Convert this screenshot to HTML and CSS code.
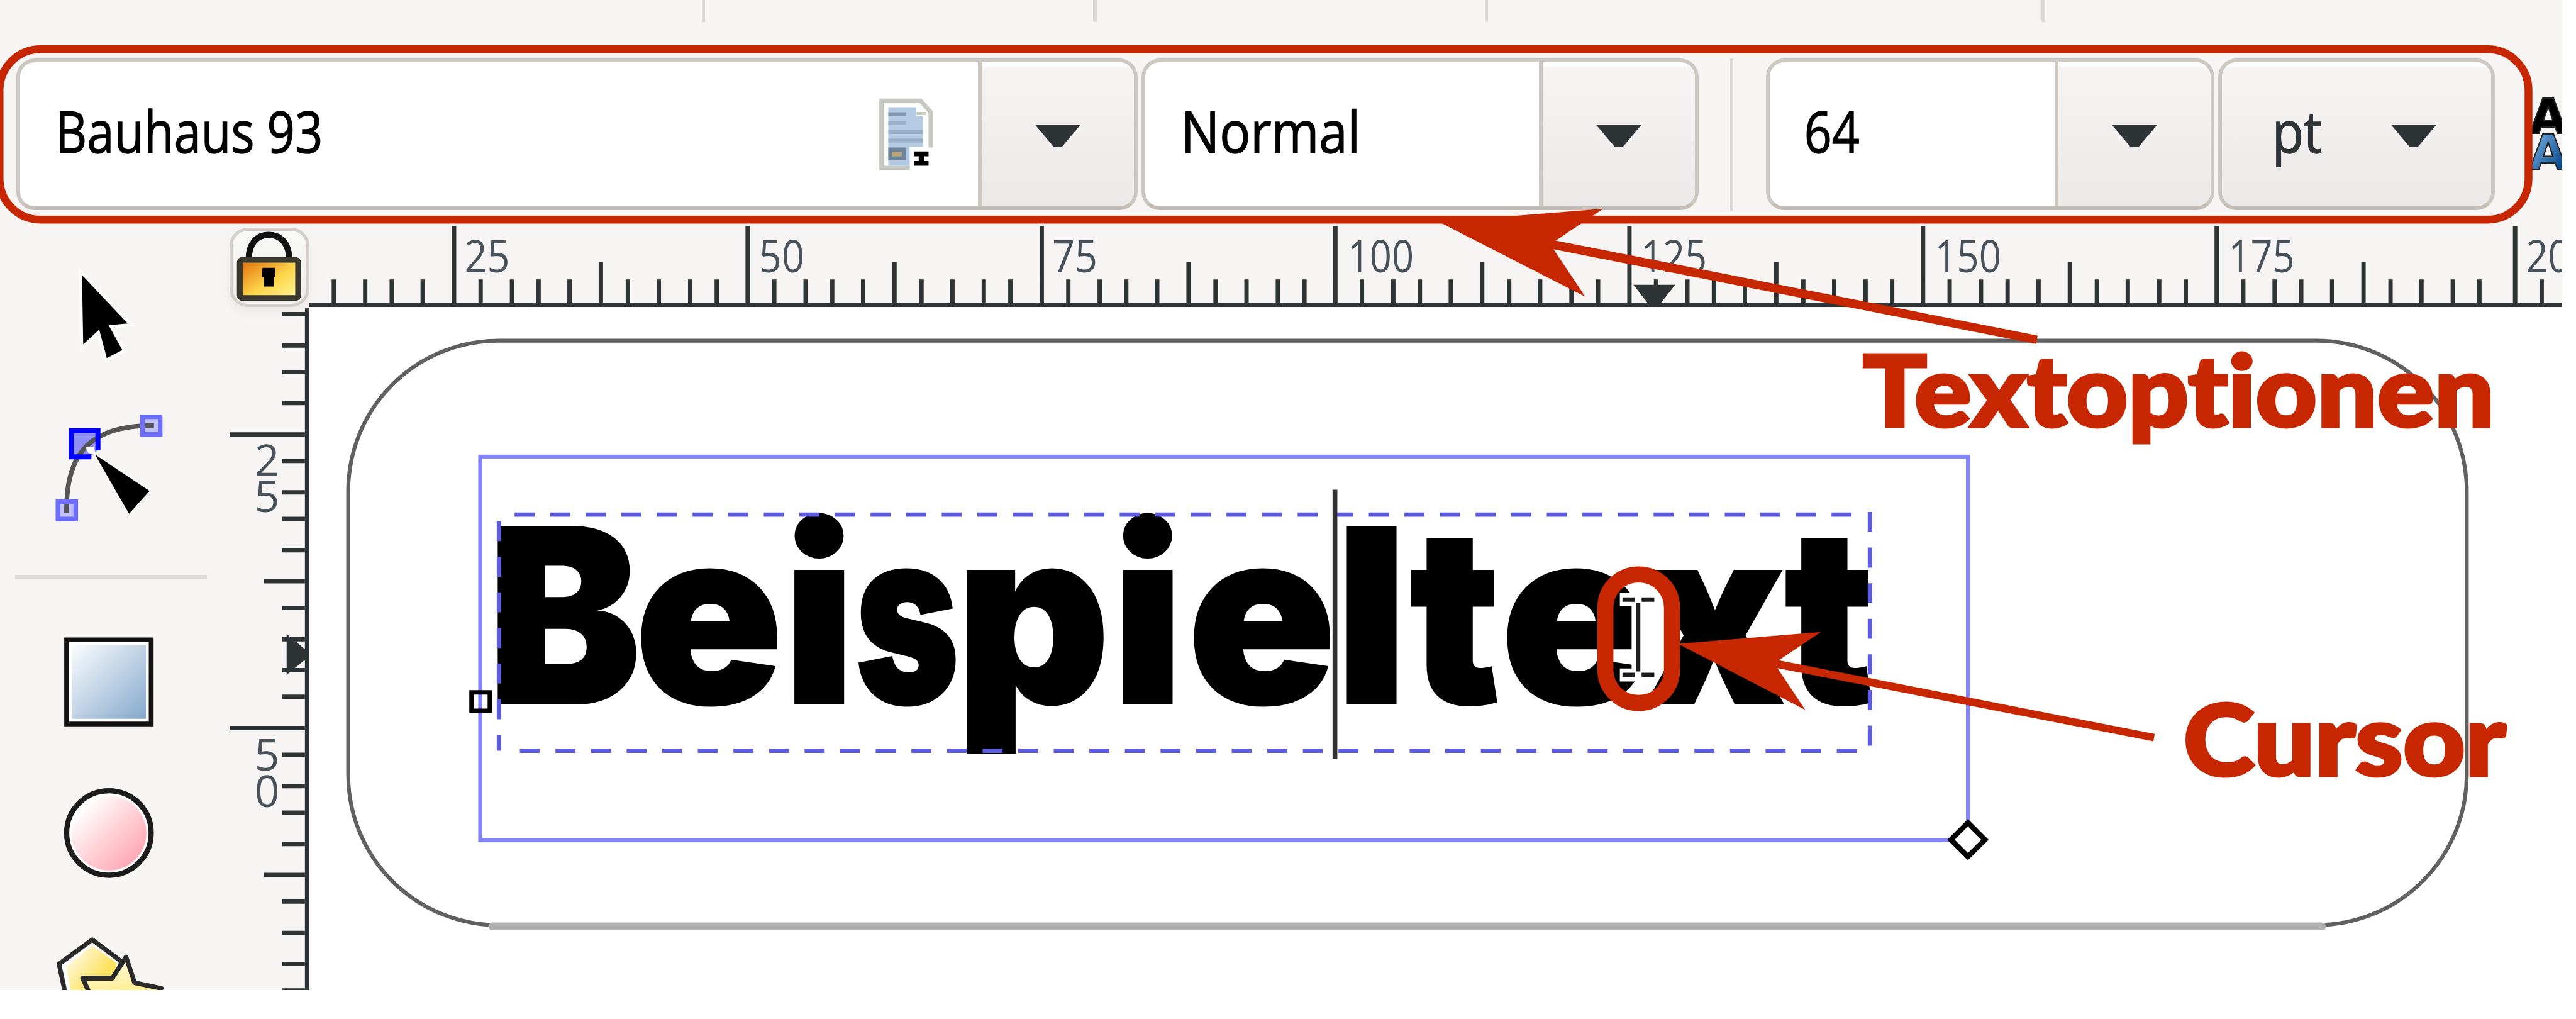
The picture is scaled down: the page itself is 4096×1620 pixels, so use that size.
FILE: index.html
```
<!DOCTYPE html>
<html lang="de">
<head>
<meta charset="utf-8">
<title>Textwerkzeug</title>
<link rel="stylesheet" href="styles.css">
</head>
<body>
<div class="app">
  <div class="commandbar"><i></i><i></i><i></i><i></i></div>

  <div class="textbar">
    <div class="combo combo-font">
      <div class="entry">
        <svg class="label" width="800" height="328" viewBox="0 0 800 328"><text x="81" y="207" textLength="614" lengthAdjust="spacingAndGlyphs">Bauhaus 93</text></svg>
        <svg class="docicon" viewBox="200 370 382 507">
          <path d="M220 392H490L560 470V715H430V855H220Z" fill="#fff"/>
          <path d="M415 855H220V392H490L560 470V715" fill="none" stroke="#c6c9c1" stroke-width="30"/>
          <path d="M267 437H460V500H508V708H415V840H267Z" fill="#b5cbe4"/>
          <path d="M465 437V495H520Z" fill="#fff"/><path d="M462 480H530" stroke="#c6c9bd" stroke-width="22"/>
          <path d="M267 485H388" stroke="#8199b5" stroke-width="28"/>
          <path d="M267 546H388M267 607H508M267 667H508" stroke="#9ab0ca" stroke-width="28"/>
          <path d="M267 715H388V802H267Z" fill="#6c8299"/><path d="M292 745H360V776H292Z" fill="#bba679"/>
          <path d="M445 742H545V775H515V808H545V840H445V808H477V775H445Z"/>
        </svg>
      </div>
      <div class="drop"><svg viewBox="0 0 104 54"><path d="M0 2H104L62 52H42Z"/></svg></div>
    </div>
    <div class="combo combo-style">
      <div class="entry"><svg class="label" width="600" height="328" viewBox="0 0 600 328"><text x="82" y="207" textLength="412" lengthAdjust="spacingAndGlyphs">Normal</text></svg></div>
      <div class="drop"><svg viewBox="0 0 104 54"><path d="M0 2H104L62 52H42Z"/></svg></div>
    </div>
    <div class="divider"></div>
    <div class="combo combo-size">
      <div class="entry"><svg class="label" width="400" height="328" viewBox="0 0 400 328"><text x="79" y="207" textLength="127" lengthAdjust="spacingAndGlyphs">64</text></svg></div>
      <div class="drop"><svg viewBox="0 0 104 54"><path d="M0 2H104L62 52H42Z"/></svg></div>
    </div>
    <div class="combo combo-unit">
      <div class="drop">
        <svg class="label" width="300" height="328" viewBox="0 0 300 328"><text class="unit" x="115" y="207" textLength="115" lengthAdjust="spacingAndGlyphs">pt</text></svg>
        <svg viewBox="0 0 104 54"><path d="M0 2H104L62 52H42Z"/></svg>
      </div>
    </div>
    <svg class="spacing-icon" viewBox="5800 200 100 210">
      <defs><linearGradient id="ga" x1="0" y1="0" x2="1" y2="1"><stop offset="0" stop-color="#8cc3f2"/><stop offset=".8" stop-color="#0b4a8c"/></linearGradient></defs>
      <text x="5850" y="305">A</text><text x="5850" y="388" fill="url(#ga)" stroke="#34506c">A</text>
    </svg>
  </div>

  <div class="work">
    <div class="toolbox">
      <svg height="357" viewBox="0 513 527 357">
        <path transform="translate(80 600) scale(.408)" d="M265 78L522 350L415 360L492 500L405 545L362 385L272 468Z" stroke="#fff" stroke-width="40" paint-order="stroke" stroke-opacity=".6"/>
      </svg>
      <svg height="449" viewBox="0 870 527 449">
        <g transform="translate(80 600) scale(.408)" fill="none">
          <path d="M205 950H355V1060L310 1098H205Z" fill="#8f8ff6"/>
          <path d="M605 873H705V972H605ZM130 1350H230V1448H130Z" fill="#c2c2fa"/>
          <path d="M178 1415C175 1130 260 920 670 922" stroke="#555" stroke-width="26"/>
          <path d="M605 873H705V972H605ZM130 1350H230V1448H130Z" stroke="#6c6cff" stroke-width="26"/>
          <path d="M318 1098H205V950H355V1062" stroke="#0000ff" stroke-width="28"/>
          <path d="M285 1045L330 1040L345 1090L300 1075Z" fill="#fff"/>
          <path d="M338 1085L645 1290L530 1418Z" fill="#000"/>
        </g>
      </svg>
      <div class="toolbox-rule"></div>
      <svg height="431" viewBox="0 1329 527 431">
        <defs><linearGradient id="gb" x1="0" y1="0" x2="1" y2="1"><stop offset="0" stop-color="#fbfcfd"/><stop offset="1" stop-color="#85a9cd"/></linearGradient></defs>
        <path d="M153 1468H347V1661H153Z" fill="#fff" stroke="#111" stroke-width="11"/><path d="M165 1480H335V1649H165Z" fill="url(#gb)"/>
      </svg>
      <svg height="340" viewBox="0 1760 527 340">
        <defs><linearGradient id="gc" x1=".15" y1=".15" x2=".85" y2=".85"><stop offset="0" stop-color="#fff"/><stop offset="1" stop-color="#ffa9b4"/></linearGradient></defs>
        <circle cx="250" cy="1912" r="97" fill="#fff" stroke="#1c1c1c" stroke-width="12"/><circle cx="250" cy="1912" r="86" fill="url(#gc)"/>
      </svg>
      <svg height="172" viewBox="0 2100 527 172">
        <defs>
          <linearGradient id="gd" x1="0" y1="0" x2=".6" y2=".6"><stop offset="0" stop-color="#fff"/><stop offset="1" stop-color="#fde25f"/></linearGradient>
          <linearGradient id="gf" x1=".4" y1="0" x2=".6" y2="1"><stop offset="0" stop-color="#fffbe0"/><stop offset=".6" stop-color="#fdec90"/></linearGradient>
        </defs>
        <g transform="translate(60 1700) scale(.408)" stroke="#2a2a2a" stroke-width="26" stroke-linejoin="round">
          <path d="M372 1118L535 1240L480 1560H250L185 1255Z" fill="#fff"/>
          <path d="M372 1150L510 1250L470 1500H270L225 1270Z" fill="url(#gd)" stroke="none"/>
          <path d="M562 1215L610 1360L760 1392L640 1560H420L318 1335H485Z" fill="url(#gf)"/>
        </g>
      </svg>
    </div>

    <div class="lockcell">
      <button class="lock" aria-label="Hilfslinien sperren">
        <svg viewBox="537 530 165 165">
          <defs><linearGradient id="ge" x1="0" y1="0" x2="1" y2="1"><stop offset="0" stop-color="#e0690c"/><stop offset=".55" stop-color="#fdd44a"/><stop offset="1" stop-color="#fff79a"/></linearGradient></defs>
          <path d="M573 594C573 560 590 539 618 539S664 560 664 594" fill="none" stroke="#111" stroke-width="14"/>
          <rect x="553" y="595" width="131" height="86" rx="6" fill="url(#ge)" stroke="#3a372c" stroke-width="13"/>
          <path d="M604 613H632V633H629V655H607V633H602Z"/>
        </svg>
      </button>
    </div>

    <svg class="ruler-h" viewBox="710 513 5171 193" preserveAspectRatio="none">
      <defs>
        <path id="ht" d="M0 519V700M61 642V700M133 642V700M194 642V700M265 642V700M337 601V700M399 642V700M470 642V700M542 642V700M603 642V700"/>
      </defs>
      <g class="ticks">
        <path d="M766 642V700M838 642V700M899 642V700M970 642V700M708 700H5881"/>
        <use href="#ht" x="1042"/><use href="#ht" x="1716"/><use href="#ht" x="2391"/><use href="#ht" x="3065"/><use href="#ht" x="3740"/><use href="#ht" x="4414"/><use href="#ht" x="5088"/><use href="#ht" x="5773"/>
      </g>
      <path d="M3749 654H3845L3806 704H3788Z" fill="#2e3436"/>
      <g class="nums">
        <text x="1066" y="626" textLength="104" lengthAdjust="spacingAndGlyphs">25</text>
        <text x="1742" y="626" textLength="104" lengthAdjust="spacingAndGlyphs">50</text>
        <text x="2415" y="626" textLength="104" lengthAdjust="spacingAndGlyphs">75</text>
        <text x="3093" y="626" textLength="152" lengthAdjust="spacingAndGlyphs">100</text>
        <text x="3766" y="626" textLength="152" lengthAdjust="spacingAndGlyphs">125</text>
        <text x="4441" y="626" textLength="152" lengthAdjust="spacingAndGlyphs">150</text>
        <text x="5115" y="626" textLength="152" lengthAdjust="spacingAndGlyphs">175</text>
        <text x="5798" y="626" textLength="152" lengthAdjust="spacingAndGlyphs">200</text>
      </g>
    </svg>

    <svg class="ruler-v" viewBox="527 706 183 1566" preserveAspectRatio="none">
      <defs>
        <path id="vt" d="M527 0H700M648 61H700M648 133H700M648 194H700M648 266H700M606 337H700M648 398H700M648 470H700M648 541H700M648 602H700"/>
      </defs>
      <g class="ticks">
        <path d="M648 721H700M648 793H700M648 854H700M648 925H700M705 706V2272"/>
        <use href="#vt" y="997"/><use href="#vt" y="1671"/>
      </g>
      <path d="M658 1455L705 1494V1510L658 1549Z" fill="#2e3436"/>
      <g class="nums" text-anchor="middle">
        <text x="613" y="1093">2</text><text x="613" y="1175">5</text>
        <text x="613" y="1768">5</text><text x="613" y="1852">0</text>
      </g>
    </svg>

    <svg class="canvas" viewBox="710 706 5171 1566" preserveAspectRatio="none">
      <rect x="799" y="782" width="4863" height="1341" rx="345" fill="none" stroke="#606060" stroke-width="9"/>
      <path d="M1130 2126H5330" stroke="#b0b0b0" stroke-width="18" stroke-linecap="round"/>
      <text class="sample" y="1614"><tspan x="1120" textLength="350" lengthAdjust="spacingAndGlyphs">B</tspan><tspan x="1457" textLength="340" lengthAdjust="spacingAndGlyphs">e</tspan><tspan x="1798">i</tspan><tspan x="1962" textLength="240" lengthAdjust="spacingAndGlyphs">s</tspan><tspan x="2194" textLength="353" lengthAdjust="spacingAndGlyphs">p</tspan><tspan x="2552">i</tspan><tspan x="2726" textLength="340" lengthAdjust="spacingAndGlyphs">e</tspan><tspan x="3066">l</tspan><tspan x="3236" textLength="206" lengthAdjust="spacingAndGlyphs">t</tspan><tspan x="3445" textLength="340" lengthAdjust="spacingAndGlyphs">e</tspan><tspan x="3775" textLength="322" lengthAdjust="spacingAndGlyphs">x</tspan><tspan x="4096" textLength="206" lengthAdjust="spacingAndGlyphs">t</tspan></text>
      <rect x="1102" y="1048" width="3415" height="880" fill="none" stroke="#8484ff" stroke-width="9"/>
      <g fill="none" stroke="#5c5cdc" stroke-width="10" stroke-dasharray="46 35.7">
        <path d="M1181 1181H4260"/><path d="M1193 1723H4270"/><path d="M1145 1196V1723"/><path d="M4292 1175V1723"/>
      </g>
      <path d="M1082 1589H1124V1631H1082Z" fill="none" stroke="#000" stroke-width="10"/>
      <path d="M4517 1888L4556 1927L4517 1966L4478 1927Z" fill="#fff" stroke="#000" stroke-width="12"/>
      <path d="M3064 1124V1742" stroke="#333" stroke-width="11"/>
      <g fill="none">
        <path d="M3718 1376H3803M3718 1549H3803M3760 1376V1549" stroke="#fff" stroke-width="30"/>
        <path d="M3724 1376H3752M3768 1376H3797M3724 1549H3752M3768 1549H3797M3760 1384V1541" stroke="#1c1c1c" stroke-width="10"/>
      </g>
    </svg>
  </div>
</div>

<svg class="notes" viewBox="0 0 5913 2338" preserveAspectRatio="none">
  <g fill="none">
    <rect x="-1" y="113" width="5805" height="391" rx="94" stroke-width="18"/>
    <rect x="3685" y="1318" width="153" height="295" rx="76" stroke-width="37"/>
  </g>
  <g>
    <path stroke="none" d="M3303 509L3680 479L3571 552L4677 770L4674 789L3566 572L3639 681Z"/>
    <path stroke="none" d="M3852 1477L4180 1450L4083 1515L4946 1684L4943 1701L4080 1533L4144 1629Z"/>
    <text x="4276" y="979" textLength="1450" lengthAdjust="spacingAndGlyphs">Textoptionen</text>
    <text x="5012" y="1779" textLength="740" lengthAdjust="spacingAndGlyphs">Cursor</text>
  </g>
</svg>
</body>
</html>
```
FILE: styles.css
```
:root { --u: 0.69271px; --edge: #cdc7c2; --ink: #2e3436; }

* { box-sizing: border-box; }

body {
  margin: 0;
  width: 4096px;
  height: 1620px;
  overflow: hidden;
  position: relative;
  background: #fff;
  font-family: "Open Sans", "Noto Sans", sans-serif;
}

svg { display: block; flex: none; }

.app {
  width: calc(5881 * var(--u));
  height: 1574px;
  background: #f6f5f3;
  overflow: hidden;
  display: flex;
  flex-direction: column;
}

.commandbar { flex: none; height: calc(104 * var(--u)); display: flex; }
.commandbar i { width: calc(8 * var(--u)); height: calc(50 * var(--u)); background: #dbd8d5; margin-left: calc(890.5 * var(--u)); }
.commandbar i:first-child { margin-left: calc(1611 * var(--u)); }
.commandbar i:last-child { margin-left: calc(1270 * var(--u)); }

.textbar {
  flex: none;
  height: calc(409 * var(--u));
  padding: calc(30 * var(--u)) 0 0 calc(37 * var(--u));
  display: flex;
  align-items: flex-start;
}
.combo {
  flex: none;
  height: calc(348 * var(--u));
  display: flex;
  border: calc(9 * var(--u)) solid var(--edge);
  border-bottom-color: #c5beb8;
  border-radius: calc(42 * var(--u));
  background: #fff;
  overflow: hidden;
  margin-right: calc(9 * var(--u));
}
.combo-font { width: calc(2574 * var(--u)); }
.combo-style { width: calc(1279 * var(--u)); }
.combo-size { width: calc(1030 * var(--u)); }
.combo-unit { width: calc(635 * var(--u)); }
.entry { flex: 1; min-width: 0; display: flex; align-items: center; justify-content: space-between; padding-right: calc(101 * var(--u)); }
.label { width: auto; height: calc(328 * var(--u)); }
.label text { font-size: 132px; fill: #000; stroke: #000; stroke-width: 2px; }
.label .unit { fill: var(--ink); stroke: var(--ink); }
.docicon { width: calc(127 * var(--u)); height: calc(169 * var(--u)); }
.drop {
  flex: none;
  width: calc(358 * var(--u));
  border-left: calc(10 * var(--u)) solid var(--edge);
  box-shadow: inset 0 calc(14 * var(--u)) calc(5 * var(--u)) calc(-4 * var(--u)) #fff;
  background: linear-gradient(#f6f5f4, #eae9e7);
  display: flex;
  align-items: center;
  justify-content: center;
}
.drop svg:last-child { width: calc(104 * var(--u)); height: calc(54 * var(--u)); margin-top: calc(8 * var(--u)); fill: var(--ink); }
.combo-unit .drop { width: 100%; border-left: 0; justify-content: flex-start; }
.combo-unit .drop svg:last-child { margin-left: calc(88 * var(--u)); }
.divider { flex: none; width: calc(8 * var(--u)); height: calc(350 * var(--u)); margin: 0 calc(74 * var(--u)) 0 calc(63 * var(--u)); background: #dbd8d5; }
.spacing-icon { width: calc(100 * var(--u)); height: calc(210 * var(--u)); margin: calc(66 * var(--u)) 0 0 calc(63 * var(--u)); }
.spacing-icon text { font: bold 110px "DejaVu Sans", sans-serif; text-anchor: middle; stroke: #222; stroke-width: 3px; }

.work {
  flex: 1;
  display: grid;
  grid-template-columns: calc(527 * var(--u)) calc(183 * var(--u)) 1fr;
  grid-template-rows: calc(193 * var(--u)) 1fr;
  min-height: 0;
}
.toolbox { grid-row: 1 / 3; overflow: hidden; }
.toolbox svg { width: calc(527 * var(--u)); height: auto; }
.toolbox-rule { height: calc(8 * var(--u)); width: calc(440 * var(--u)); margin: calc(1 * var(--u)) 0 calc(1 * var(--u)) calc(35 * var(--u)); background: #dbd8d5; }

.lockcell { padding: calc(9 * var(--u)) 0 0 0; }
.lock {
  display: block;
  width: calc(183 * var(--u));
  height: calc(183 * var(--u));
  padding: 0;
  border: calc(8 * var(--u)) solid #d3cec9;
  border-radius: calc(42 * var(--u));
  background: linear-gradient(#f9f9f8, #efeeed);
  box-shadow: 0 calc(14 * var(--u)) calc(24 * var(--u)) #0000000c;
}
.lock svg { width: 100%; height: 100%; }

.ruler-h, .ruler-v, .canvas { width: 100%; height: 100%; min-height: 0; }
.canvas { background: #fff; }
.ticks { fill: none; stroke: var(--ink); stroke-width: 10px; }
.nums text { font-size: 102px; fill: #47525a; }
.ruler-v .nums text { font-size: 100px; }

.sample { font: 900 556px Inter, sans-serif; fill: #000; stroke: #000; stroke-width: 5px; }

.notes { position: absolute; left: 0; top: 0; width: 4096px; height: 1620px; fill: #c62700; stroke: #c62700; }
.notes text { font: 900 226px Lato, sans-serif; font-variant-ligatures: none; stroke-width: 7px; stroke-linejoin: miter; }
```
